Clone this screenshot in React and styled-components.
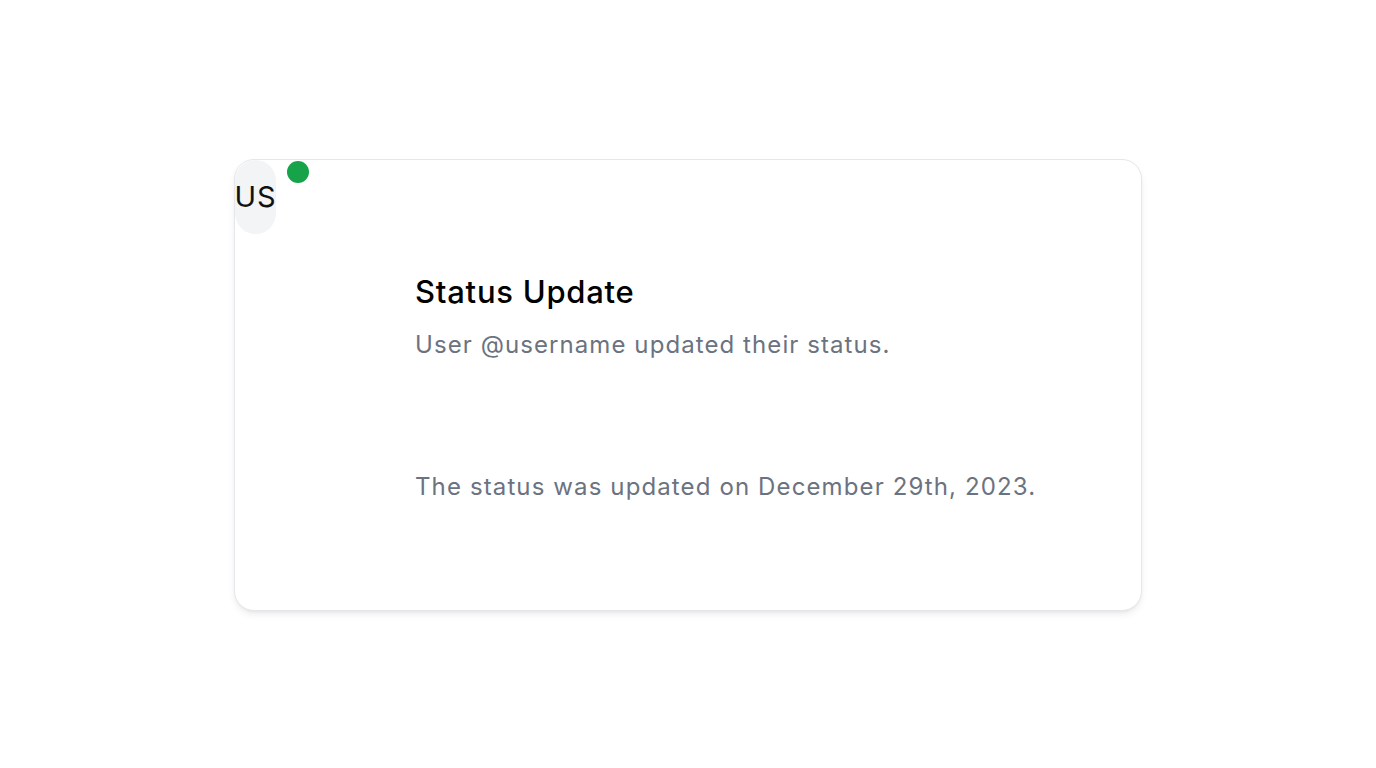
import React from "react";
import styled, { createGlobalStyle } from "styled-components";

const GlobalStyle = createGlobalStyle`
  * { box-sizing: border-box; }
  html, body { margin: 0; padding: 0; background: #ffffff; }
  body { font-family: Inter, "Noto Sans", sans-serif; }
`;

const Page = styled.div`
  min-height: 100vh;
  display: flex;
  align-items: center;
  justify-content: center;
`;

const Card = styled.div`
  position: relative;
  width: 908px;
  height: 452px;
  margin-top: 1px;
  display: flex;
  align-items: flex-start;
  border: 1px solid #e5e7eb;
  border-radius: 20px;
  background: #ffffff;
  box-shadow: 0 4px 8px -2px rgba(0, 0, 0, 0.1), 0 2px 4px -2px rgba(0, 0, 0, 0.06);
`;

const Avatar = styled.div`
  flex: 0 0 auto;
  width: 41px;
  height: 74px;
  border-radius: 9999px;
  background: #f3f4f6;
  display: flex;
  align-items: center;
  justify-content: center;
  font-size: 29px;
  letter-spacing: 0.8px;
  color: #111111;
`;

const StatusDot = styled.span`
  position: absolute;
  left: 52px;
  top: 1px;
  width: 22px;
  height: 22px;
  border-radius: 50%;
  background: #16a34a;
`;

const Content = styled.div`
  display: flex;
  flex-direction: column;
  padding: 114px 0 0 139px;
`;

const Title = styled.h2`
  margin: 0;
  font-size: 31px;
  line-height: 36px;
  font-weight: 500;
  letter-spacing: 0.75px;
  color: #000000;
`;

const Text = styled.p`
  margin: ${(p) => p.$top}px 0 0;
  font-size: 24px;
  line-height: 32px;
  letter-spacing: ${(p) => p.$spacing}px;
  color: #6b7280;
`;

export default function App() {
  return (
    <>
      <GlobalStyle />
      <Page>
        <Card>
          <Avatar>US</Avatar>
          <StatusDot />
          <Content>
            <Title>Status Update</Title>
            <Text $top={19} $spacing={1.08}>User @username updated their status.</Text>
            <Text $top={110} $spacing={1.12}>The status was updated on December 29th, 2023.</Text>
          </Content>
        </Card>
      </Page>
    </>
  );
}
